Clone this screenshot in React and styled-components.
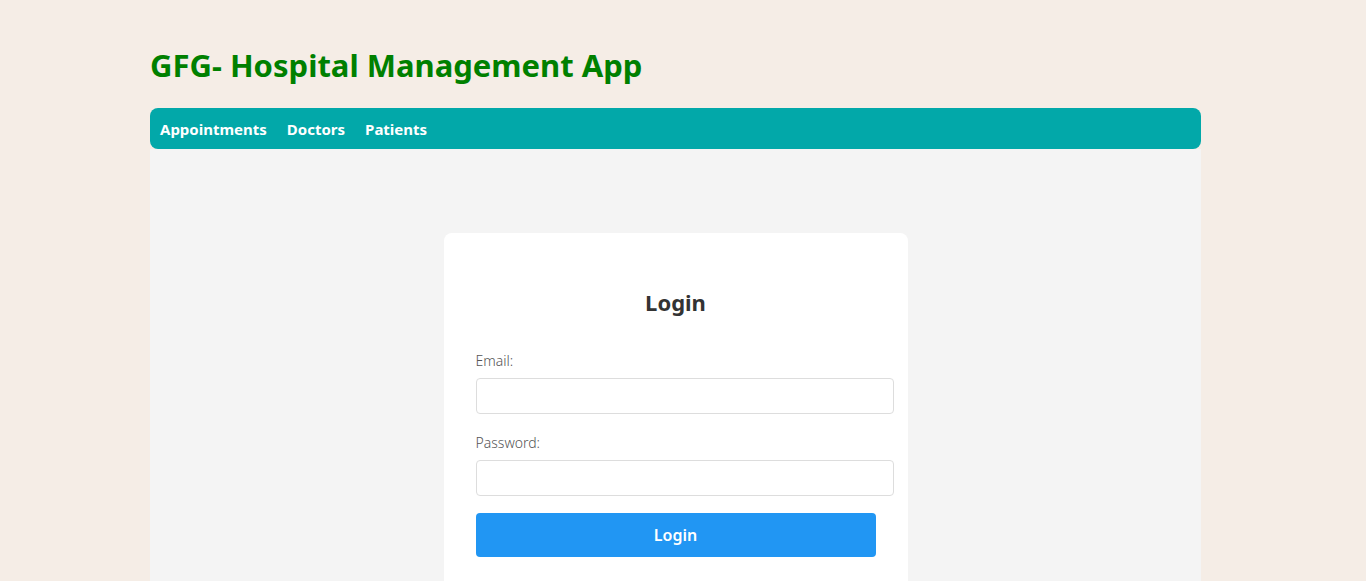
import styled, { createGlobalStyle } from "styled-components";

const GlobalStyle = createGlobalStyle`
  body {
    margin: 0;
    padding-right: 15px;
    background-color: #f5ede6;
    font-family: "Noto Sans", "Open Sans", sans-serif;
  }
`;

function App() {
  return (
    <>
      <GlobalStyle />
      <Page>
        <Title>GFG- Hospital Management App</Title>
        <Navbar>
          <NavLink href="#">Appointments</NavLink>
          <NavLink href="#">Doctors</NavLink>
          <NavLink href="#">Patients</NavLink>
        </Navbar>
        <Panel>
          <Card>
            <CardTitle>Login</CardTitle>
            <Field>
              <Label>Email:</Label>
              <Input type="email" />
            </Field>
            <Field>
              <Label>Password:</Label>
              <Input type="password" />
            </Field>
            <Button>Login</Button>
          </Card>
        </Panel>
      </Page>
    </>
  );
}

export default App;

const Page = styled.div`
  max-width: 1051px;
  margin: 0 auto;
  padding-top: 44px;
`;

const Title = styled.h1`
  color: #008000;
  font-size: 31px;
  font-weight: 700;
  margin: 0 0 22px 0;
  line-height: 42px;
`;

const Navbar = styled.nav`
  background-color: #02a8a9;
  height: 41px;
  border-radius: 8px;
  display: flex;
  align-items: center;
  gap: 20px;
  padding: 0 10px;
`;

const NavLink = styled.a`
  color: #fff;
  text-decoration: none;
  font-weight: 700;
  font-size: 15px;
`;

const Panel = styled.main`
  background-color: #f4f4f4;
  padding: 84px 0 180px;
  display: flex;
  justify-content: center;
`;

const Card = styled.section`
  background-color: #fff;
  width: 400px;
  padding: 54px 32px 32px;
  border-radius: 8px;
`;

const CardTitle = styled.h2`
  text-align: center;
  color: #333;
  font-size: 22px;
  font-weight: 700;
  margin: 0 0 34px 0;
`;

const Field = styled.div`
  margin-bottom: 19px;
`;

const Label = styled.label`
  display: block;
  color: #555;
  font-size: 14px;
  font-weight: 300;
  margin: 4px 0 8px;
`;

const Input = styled.input`
  width: 100%;
  height: 20px;
  padding: 7px 8px;
  border: 1px solid #ddd;
  border-radius: 4px;
  font-size: 14px;
  display: block;
`;

const Button = styled.button`
  width: 100%;
  height: 44px;
  margin-top: -2px;
  background-color: #2196f3;
  color: #fff;
  border: none;
  border-radius: 4px;
  font-size: 16px;
  font-weight: 600;
  font-family: "Noto Sans", sans-serif;
  cursor: pointer;
`;
